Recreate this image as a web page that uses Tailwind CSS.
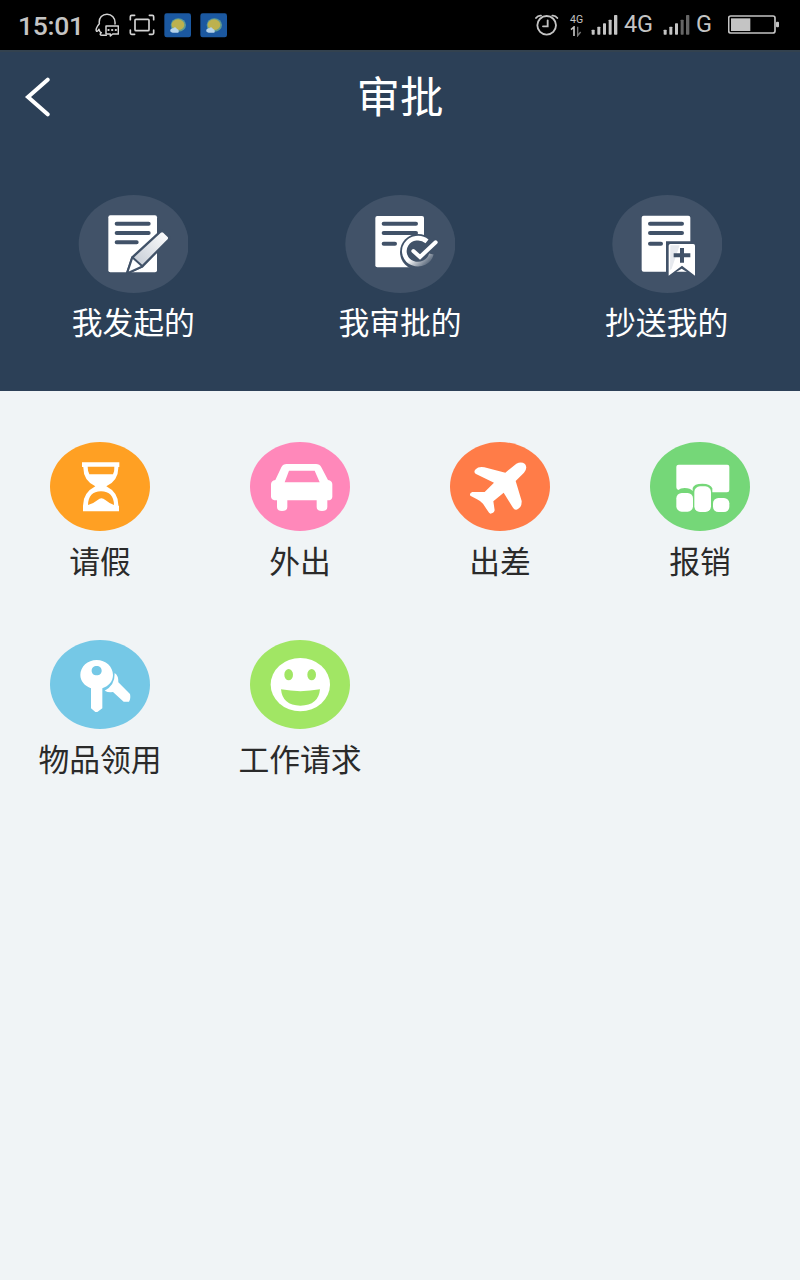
<!DOCTYPE html>
<html lang="zh-CN">
<head>
    <meta charset="UTF-8">
    <meta name="viewport" content="width=device-width, initial-scale=1.0">
    <title>审批</title>
    <script src="https://cdn.jsdelivr.net/npm/@tailwindcss/browser@4"></script>
</head>
<body class="min-h-screen bg-[#f0f4f6] font-['Noto_Sans_CJK_SC',sans-serif] text-[#2a2a2a]">
    <!-- Status bar -->
    <div class="flex h-[50px] items-center justify-between bg-black pl-[18px] pr-[20px] font-[Roboto,sans-serif] text-[#c4c4c4]">
        <div class="flex items-center">
            <span class="w-[77px] pt-[2px] text-[26.5px] leading-none font-medium tracking-[-0.3px]">15:01</span>
            <svg class="h-[24px] w-[24px]" viewBox="285 40 72 72" fill="none" stroke="#d4d4d4" stroke-width="4.5" stroke-linejoin="round" stroke-linecap="round">
                <path d="M345 73 C349 34 293 34 298 72 C290 80 286 92 290 95 C293 96 295 91 297 89 C298 94 300 98 304 99 C299 103 300 107 306 107 H319"/>
                <path d="M318 79 H355 V103 H338 L331 109 V103 H318 Z"/>
                <path d="M325 91 h1 M336 91 h1 M347 91 h1" stroke-width="6"/>
            </svg>
            <svg class="ml-[10px] h-[22px] w-[26px]" viewBox="388 43 78 66" fill="none" stroke="#d4d4d4" stroke-width="5" stroke-linecap="round" stroke-linejoin="round">
                <path d="M405 47 H396 Q392 47 392 51 V60 M449 47 H458 Q462 47 462 51 V60 M405 104 H396 Q392 104 392 100 V91 M449 104 H458 Q462 104 462 100 V91"/>
                <rect x="406" y="59" width="42" height="34" rx="3"/>
            </svg>
            <svg class="ml-[9px] h-[25px] w-[27px]" viewBox="492 38 81 75">
                <rect x="493" y="39" width="80" height="72" rx="7" fill="#1b58a0"/>
                <ellipse cx="535" cy="74" rx="23" ry="20" fill="#5f9b93"/>
                <ellipse cx="534" cy="73" rx="19" ry="16" fill="#bdb14e"/>
                <path d="M518 97 Q509 95 511 88 Q514 82 520 84 Q526 77 531 86 Q539 89 535 97 Z" fill="#b5d3ea"/>
            </svg>
            <svg class="ml-[9px] h-[25px] w-[27px]" viewBox="492 38 81 75">
                <rect x="493" y="39" width="80" height="72" rx="7" fill="#1b58a0"/>
                <ellipse cx="535" cy="74" rx="23" ry="20" fill="#5f9b93"/>
                <ellipse cx="534" cy="73" rx="19" ry="16" fill="#bdb14e"/>
                <path d="M518 97 Q509 95 511 88 Q514 82 520 84 Q526 77 531 86 Q539 89 535 97 Z" fill="#b5d3ea"/>
            </svg>
        </div>
        <div class="flex items-center">
            <svg class="h-[22px] w-[24px]" viewBox="42 42 72 66" fill="none" stroke="#c4c4c4" stroke-width="5.5" stroke-linecap="round">
                <circle cx="77" cy="76" r="28"/>
                <path d="M80 61 V79 H66 M45 54 Q51 46 60 47 M109 54 Q103 46 94 47"/>
            </svg>
            <div class="ml-[11px] flex w-[15px] flex-col">
                <span class="text-[10.5px] leading-[12px]">4G</span>
                <svg class="h-[11px] w-[12px]" viewBox="148 78 36 33" fill="none" stroke="#c4c4c4" stroke-width="5">
                    <path d="M151 89 L160 81 V108"/>
                    <path d="M171 80 V107 L180 96" stroke="#777" stroke-width="4"/>
                </svg>
            </div>
            <svg class="ml-[6px] h-[22px] w-[27px]" viewBox="212 42 81 66" fill="#c4c4c4">
                <rect x="214" y="89" width="9" height="15" rx="2"/>
                <rect x="231" y="80" width="9" height="24" rx="2"/>
                <rect x="248" y="70" width="9" height="34" rx="2"/>
                <rect x="265" y="59" width="9" height="45" rx="2"/>
                <rect x="281" y="45" width="10" height="59" rx="2"/>
            </svg>
            <span class="ml-[6px] w-[32px] text-[23.5px] leading-none tracking-[-0.3px]">4G</span>
            <svg class="ml-[7px] h-[22px] w-[27px]" viewBox="428 42 81 66" fill="#c4c4c4">
                <rect x="430" y="89" width="9" height="15" rx="2"/>
                <rect x="447" y="80" width="9" height="24" rx="2"/>
                <rect x="464" y="70" width="9" height="34" rx="2"/>
                <rect x="481" y="59" width="9" height="45" rx="2" fill="#666"/>
                <rect x="497" y="45" width="10" height="59" rx="2" fill="#666"/>
            </svg>
            <span class="ml-[6px] w-[19px] text-[23.5px] leading-none">G</span>
            <svg class="ml-[13px] h-[20px] w-[52px]" viewBox="623 45 156 60">
                <rect x="625" y="48" width="139" height="51" rx="6" fill="none" stroke="#c4c4c4" stroke-width="5"/>
                <rect x="632" y="55" width="58" height="38" fill="#c4c4c4"/>
                <rect x="767" y="65" width="9" height="17" rx="3" fill="#c4c4c4"/>
            </svg>
        </div>
    </div>

    <div class="h-[341px] bg-[#2c4057] text-white">
        <!-- Title bar -->
        <div class="grid h-[92px] grid-cols-[1fr_auto_1fr] items-center border-t-2 border-[#33424f] px-[24px]">
            <svg class="h-[40px] w-[27px]" viewBox="72 80 81 120" fill="none" stroke="#fff" stroke-width="12" stroke-linecap="round" stroke-linejoin="miter">
                <path d="M143 88 L84 140 L143 192"/>
            </svg>
            <h1 class="pb-[4px] text-[43.5px] leading-none">审批</h1>
        </div>

        <!-- My approvals -->
        <div class="grid grid-cols-3 pt-[53px] text-[30.8px] leading-[44px]">
            <a href="#" class="flex flex-col items-center">
                <svg class="h-[98px] w-[110px]" viewBox="55 29 330 294">
                    <defs>
                        <linearGradient id="pen" x1="0" y1="1" x2="1" y2="0">
                            <stop offset="0.2" stop-color="#c7cdd6"/>
                            <stop offset="1" stop-color="#fff"/>
                        </linearGradient>
                    </defs>
                    <ellipse cx="222" cy="176" rx="165" ry="147" fill="#415268"/>
                    <rect x="146" y="90" width="146" height="171" rx="6" fill="#fff"/>
                    <path d="M171 115 H267 M171 143 H267 M171 171 H231" stroke="#415268" stroke-width="12" stroke-linecap="round"/>
                    <path d="M202 264 L218 216 L302 139 Q308 135 313 140 L327 153 Q331 158 326 164 L248 243 Z" fill="url(#pen)" stroke="#415268" stroke-width="7" stroke-linejoin="round"/>
                    <path d="M202 264 L218 216 L248 243 Z" fill="#fff" stroke="#415268" stroke-width="6" stroke-linejoin="round"/>
                </svg>
                <span class="mt-[6px]">我发起的</span>
            </a>
            <a href="#" class="flex flex-col items-center">
                <svg class="h-[98px] w-[110px]" viewBox="60 29 330 294">
                    <defs>
                        <linearGradient id="ring" x1="0" y1="0" x2="1" y2="1">
                            <stop offset="0.5" stop-color="#fff"/>
                            <stop offset="1" stop-color="#415268"/>
                        </linearGradient>
                    </defs>
                    <ellipse cx="226" cy="176" rx="165" ry="147" fill="#415268"/>
                    <rect x="151" y="92" width="146" height="154" rx="6" fill="#fff"/>
                    <path d="M176 115 H273 M176 143 H273 M176 175 H210" stroke="#415268" stroke-width="12" stroke-linecap="round"/>
                    <circle cx="279" cy="200" r="54" fill="#415268"/>
                    <path d="M306 168 A41 39 0 1 0 319 206" fill="none" stroke="url(#ring)" stroke-width="14"/>
                    <path d="M264 196 L284 215 L328 172" fill="none" stroke="#415268" stroke-width="23" stroke-linecap="round" stroke-linejoin="round"/>
                    <path d="M265 197 L285 215 L332 171" fill="none" stroke="#fff" stroke-width="12" stroke-linecap="round"/>
                </svg>
                <span class="mt-[6px]">我审批的</span>
            </a>
            <a href="#" class="flex flex-col items-center">
                <svg class="h-[98px] w-[110px]" viewBox="65 29 330 294">
                    <ellipse cx="231" cy="176" rx="165" ry="147" fill="#415268"/>
                    <rect x="154" y="91" width="146" height="168" rx="6" fill="#fff"/>
                    <path d="M179 115 H275 M179 143 H275 M179 175 H212" stroke="#415268" stroke-width="12" stroke-linecap="round"/>
                    <path d="M227 168 H319 V278 L274 250 L227 278 Z" fill="#415268"/>
                    <path d="M240 176 H309 Q314 176 314 181 V271 L275 241 L235 271 V181 Q235 176 240 176 Z" fill="#fff"/>
                    <path d="M240 180 H268 L244 250 L239 254 Z" fill="#e6e9ee"/>
                    <path d="M250 210 H300 M275 188 V232" stroke="#415268" stroke-width="12"/>
                </svg>
                <span class="mt-[6px]">抄送我的</span>
            </a>
        </div>
    </div>

    <!-- Request types -->
    <div class="grid grid-cols-4 gap-y-[58px] pt-[51px] text-[30.8px] leading-[44px]">
        <a href="#" class="flex flex-col items-center">
            <svg class="h-[89px] w-[100px]" viewBox="75 35 300 267">
                <ellipse cx="225" cy="168.500" rx="150" ry="133.500" fill="#ffa023"/>
                <path d="M171 96 H283 V110 H280 Q281 150 244 168 Q281 187 280 226 H282 V243 H174 V226 Q174 187 211 168 Q174 150 175 110 H171 Z" fill="#fff"/>
                <path d="M188 109 H268 Q269 122 264 132 H193 Q188 122 188 109 Z" fill="#ffa023"/>
                <path d="M189 224 Q190 184 228 183 Q266 184 267 224 Q250 217 241 209 Q229 199 218 209 Q208 218 189 224 Z" fill="#ffa023"/>
            </svg>
            <span class="mt-[7px]">请假</span>
        </a>
        <a href="#" class="flex flex-col items-center">
            <svg class="h-[89px] w-[100px]" viewBox="75 35 300 267">
                <ellipse cx="225" cy="168.500" rx="150" ry="133.500" fill="#ff88ba"/>
                <path fill-rule="evenodd" d="M185 101 H273 Q284 101 289 111 L309 149 Q322 151 322 162 V199 Q322 210 307 210 V230 Q307 242 291 242 Q275 242 275 230 V210 H187 V230 Q187 242 171 242 Q156 242 156 230 V210 Q138 210 138 199 V162 Q138 151 151 149 L169 111 Q174 101 185 101 Z M192 121 L179 156 H284 L269 121 Z" fill="#fff"/>
            </svg>
            <span class="mt-[7px]">外出</span>
        </a>
        <a href="#" class="flex flex-col items-center">
            <svg class="h-[89px] w-[100px]" viewBox="75 35 300 267">
                <ellipse cx="225" cy="168.500" rx="150" ry="133.500" fill="#ff7c48"/>
                <path d="M241 127 L274 100 Q289 93 300 101 Q309 113 297 127 L272 152 L290 212 Q291 233 274 238 Q267 239 263 231 L236 187 L205 213 L209 240 Q206 250 196 250 Q192 249 189 243 L174 220 Q168 213 156 207 L136 196 Q132 189 142 185 L179 185 L207 157 L153 131 Q144 126 152 117 Q160 108 178 111 Z" fill="#fff"/>
            </svg>
            <span class="mt-[7px]">出差</span>
        </a>
        <a href="#" class="flex flex-col items-center">
            <svg class="h-[89px] w-[100px]" viewBox="75 35 300 267">
                <ellipse cx="225" cy="168.500" rx="150" ry="133.500" fill="#75d778"/>
                <path d="M161 103 H307 Q313 103 313 109 V179 Q313 186 306 186 H262 V174 Q257 160 232 160 Q207 160 203 173 V182 Q196 173 179 173 Q166 173 160 179 Q154 178 154 171 V109 Q154 103 161 103 Z" fill="#fff"/>
                <rect x="154" y="188" width="50" height="56" rx="16" fill="#fff"/>
                <rect x="208" y="168" width="50" height="77" rx="17" fill="#fff"/>
                <rect x="264" y="203" width="49" height="42" rx="16" fill="#fff"/>
            </svg>
            <span class="mt-[7px]">报销</span>
        </a>
        <a href="#" class="flex flex-col items-center">
            <svg class="h-[89px] w-[100px]" viewBox="75 29 300 267">
                <ellipse cx="225" cy="162.500" rx="150" ry="133.500" fill="#75c8e6"/>
                <path d="M269 128 Q281 136 280 156 L315 191 Q318 205 312 214 H296 L264 185 Q250 187 239 181 Q270 165 269 128 Z" fill="#fff"/>
                <path fill-rule="evenodd" d="M215 89 C242 89 264 109 264 134 C264 153 251 167 232 174 V234 L217 245 H211 L198 234 V174 C179 167 166 152 166 134 C166 109 188 89 215 89 Z M215 107 C206 107 200 113 200 121 C200 129 206 135 215 135 C224 135 230 129 230 121 C230 113 224 107 215 107 Z" fill="#fff"/>
            </svg>
            <span class="mt-[7px]">物品领用</span>
        </a>
        <a href="#" class="flex flex-col items-center">
            <svg class="h-[89px] w-[100px]" viewBox="75 29 300 267">
                <ellipse cx="225" cy="162.500" rx="150" ry="133.500" fill="#a1e664"/>
                <ellipse cx="226" cy="163" rx="89" ry="80" fill="#fff"/>
                <ellipse cx="191" cy="133" rx="13" ry="17" fill="#a1e664"/>
                <ellipse cx="260" cy="133" rx="13" ry="17" fill="#a1e664"/>
                <path d="M168 177 Q226 188 285 177 Q281 225 226 226 Q172 225 168 177 Z" fill="#a1e664"/>
            </svg>
            <span class="mt-[7px]">工作请求</span>
        </a>
    </div>
</body>
</html>
